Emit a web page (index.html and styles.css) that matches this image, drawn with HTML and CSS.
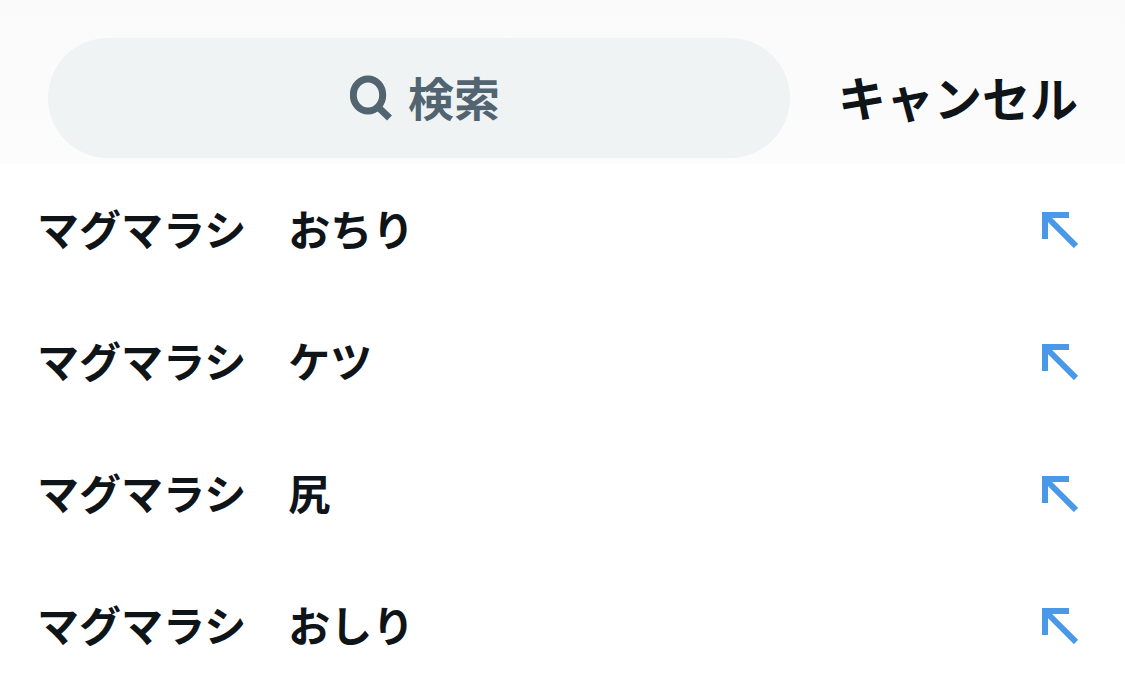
FILE: index.html
```html
<!DOCTYPE html>
<html lang="ja">
<head>
    <meta charset="UTF-8">
    <meta name="viewport" content="width=device-width, initial-scale=1.0">
    <title>検索</title>
    <link rel="stylesheet" href="styles.css">
</head>
<body>
    <header class="search-header">
        <label class="search-box">
            <svg class="search-icon" viewBox="0 0 44 46" aria-hidden="true">
                <ellipse cx="18" cy="20" rx="14.700" ry="16" />
                <path d="M28 32 L39.500 43" />
            </svg>
            <input class="search-input" type="text" placeholder="検索" aria-label="検索">
        </label>
        <button class="cancel" type="button">キャンセル</button>
    </header>

    <ul class="suggestions">
        <li class="suggestion">
            <a class="term" href="#">マグマラシ　おちり</a>
            <button class="fill" type="button" aria-label="検索ボックスに入力">
                <svg class="arrow" viewBox="0 0 36 36" aria-hidden="true"><path d="M27 3 H3 V27 M3 3 L34 34" /></svg>
            </button>
        </li>
        <li class="suggestion">
            <a class="term" href="#">マグマラシ　ケツ</a>
            <button class="fill" type="button" aria-label="検索ボックスに入力">
                <svg class="arrow" viewBox="0 0 36 36" aria-hidden="true"><path d="M27 3 H3 V27 M3 3 L34 34" /></svg>
            </button>
        </li>
        <li class="suggestion">
            <a class="term" href="#">マグマラシ　尻</a>
            <button class="fill" type="button" aria-label="検索ボックスに入力">
                <svg class="arrow" viewBox="0 0 36 36" aria-hidden="true"><path d="M27 3 H3 V27 M3 3 L34 34" /></svg>
            </button>
        </li>
        <li class="suggestion">
            <a class="term" href="#">マグマラシ　おしり</a>
            <button class="fill" type="button" aria-label="検索ボックスに入力">
                <svg class="arrow" viewBox="0 0 36 36" aria-hidden="true"><path d="M27 3 H3 V27 M3 3 L34 34" /></svg>
            </button>
        </li>
    </ul>
</body>
</html>
```

FILE: styles.css
```css
* {
    box-sizing: border-box;
}
body {
    margin: 0;
    background: #fff;
    color: #0f1419;
    font-family: "Noto Sans CJK JP", sans-serif;
}
button, input {
    margin: 0;
    padding: 0;
    border: none;
    background: none;
    color: inherit;
    font-family: inherit;
}
button {
    cursor: pointer;
}
.search-header {
    display: flex;
    align-items: center;
    gap: 48px;
    padding: 38px 47px 6px 48px;
    background: linear-gradient(#fafafa, #fcfcfc);
}
.search-box {
    flex: 1;
    display: flex;
    justify-content: center;
    align-items: center;
    gap: 14px;
    height: 120px;
    padding-left: 12px;
    border-radius: 60px;
    background: #eff3f4;
    color: #536471;
}
.search-icon {
    width: 44px;
    height: 46px;
    fill: none;
    stroke: currentColor;
    stroke-width: 7;
}
.search-input {
    field-sizing: content;
    padding-bottom: 4px;
    font-size: 46px;
    font-weight: bold;
    outline: none;
}
.search-input::placeholder {
    color: #536471;
    opacity: 1;
}
.cancel {
    padding-bottom: 4px;
    font-size: 48px;
    font-weight: bold;
    white-space: nowrap;
}
.suggestions {
    margin: 0;
    padding: 0;
    list-style: none;
}
.suggestion {
    display: flex;
    justify-content: space-between;
    align-items: center;
    height: 132px;
    padding: 0 47px 0 37px;
}
.term {
    padding-bottom: 6px;
    color: inherit;
    font-size: 42px;
    font-weight: bold;
    text-decoration: none;
}
.fill {
    display: flex;
}
.arrow {
    width: 36px;
    height: 36px;
    fill: none;
    stroke: #4a99e9;
    stroke-width: 6;
}
```
